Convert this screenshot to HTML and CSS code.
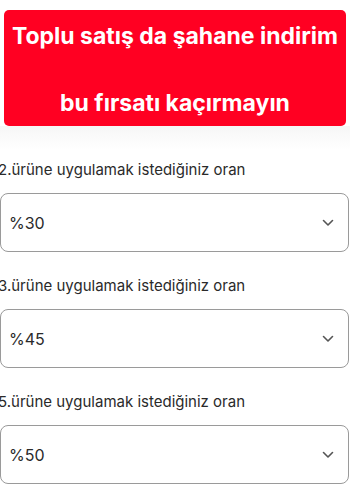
FILE: index.html
```html
<!DOCTYPE html>
<html lang="tr">
<head>
<meta charset="utf-8">
<link rel="stylesheet" href="styles.css">
</head>
<body>
<div class="page">
  <div class="banner">
    <p class="banner-line">Toplu satış da şahane indirim</p>
    <p class="banner-line">bu fırsatı kaçırmayın</p>
  </div>
  <div class="shade"></div>
  <div class="form">
    <div class="field">
      <label class="label">2.ürüne uygulamak istediğiniz oran</label>
      <div class="select"><span class="value">%30</span>
        <svg class="chev" width="12" height="8" viewBox="0 0 12 8"><path d="M1.5 1.5 L6 6 L10.5 1.5" fill="none" stroke="#555" stroke-width="1.6" stroke-linecap="round" stroke-linejoin="round"/></svg>
      </div>
    </div>
    <div class="field">
      <label class="label">3.ürüne uygulamak istediğiniz oran</label>
      <div class="select"><span class="value">%45</span>
        <svg class="chev" width="12" height="8" viewBox="0 0 12 8"><path d="M1.5 1.5 L6 6 L10.5 1.5" fill="none" stroke="#555" stroke-width="1.6" stroke-linecap="round" stroke-linejoin="round"/></svg>
      </div>
    </div>
    <div class="field">
      <label class="label">5.ürüne uygulamak istediğiniz oran</label>
      <div class="select"><span class="value">%50</span>
        <svg class="chev" width="12" height="8" viewBox="0 0 12 8"><path d="M1.5 1.5 L6 6 L10.5 1.5" fill="none" stroke="#555" stroke-width="1.6" stroke-linecap="round" stroke-linejoin="round"/></svg>
      </div>
    </div>
  </div>
</div>
</body>
</html>
```
FILE: styles.css
```css
html, body {
  margin: 0;
  padding: 0;
  background: #ffffff;
}
body {
  font-family: Inter, "Liberation Sans", sans-serif;
  color: #222;
  overflow: hidden;
}
.page {
  width: 350px;
}
.banner {
  margin: 10px 4px 0 4px;
  height: 116px;
  box-sizing: border-box;
  background: #ff0022;
  border-radius: 5px;
  display: flex;
  flex-direction: column;
  align-items: center;
  padding-top: 12px;
  gap: 39px;
}
.banner-line {
  margin: 0;
  color: #fff;
  font-weight: 700;
  font-size: 23px;
  line-height: 28px;
  white-space: nowrap;
}
.shade {
  height: 34px;
  background: linear-gradient(#f6f6f6, #ffffff 70%);
}
.form {
  display: flex;
  flex-direction: column;
  gap: 24px;
}
.field {
  display: flex;
  flex-direction: column;
  gap: 13px;
}
.label {
  font-size: 15px;
  line-height: 20px;
  color: #2a2a2a;
  margin-left: -2px;
  white-space: nowrap;
}
.select {
  height: 59px;
  box-sizing: border-box;
  width: 349px;
  border: 1px solid #9a9a9a;
  border-radius: 8px;
  display: flex;
  align-items: center;
  justify-content: space-between;
  padding: 0 14px 0 8px;
  background: #fff;
}
.value {
  font-size: 16px;
  color: #2a2a2a;
}
.chev {
  display: block;
}
```
